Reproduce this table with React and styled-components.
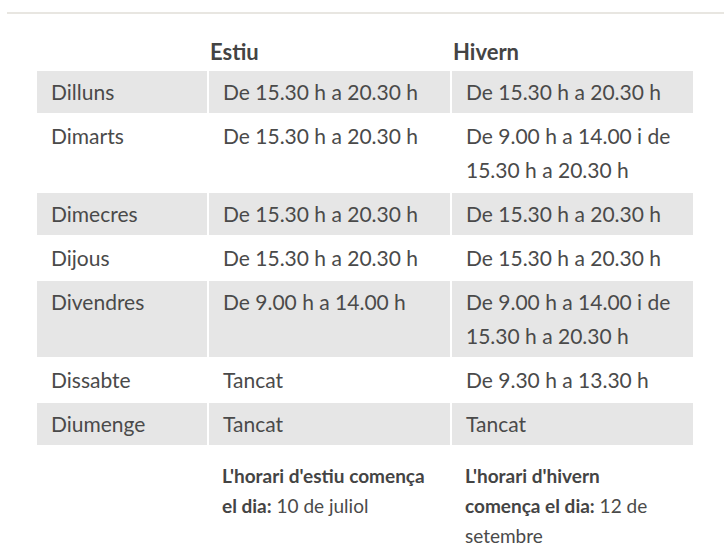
import React from 'react'
import styled, { createGlobalStyle } from 'styled-components'

const GlobalStyle = createGlobalStyle`
  body {
    margin: 0;
    background: #fff;
    font-family: Lato, "Open Sans", sans-serif;
    color: #4a4a4a;
  }
`

const Page = styled.div`
  padding: 12px 0 0 7px;
`

const Rule = styled.div`
  border-top: 2px solid #e8e6e1;
  padding: 19px 0 0 28px;
`

const Table = styled.table`
  border-collapse: separate;
  border-spacing: 2px;
  table-layout: fixed;
  width: 659px;
`

const Head = styled.th`
  text-align: left;
  font-weight: 700;
  font-size: 22px;
  line-height: 34px;
  padding: 0 1px;
  color: #444;
`

const Cell = styled.td`
  background: ${p => (p.shaded ? '#e6e6e6' : 'transparent')};
  font-size: 21px;
  line-height: 34px;
  padding: 4px 15px 4px 14px;
  vertical-align: top;
`

const Note = styled.td`
  font-size: 19px;
  line-height: 30px;
  padding: 14px 15px 0 13px;
  vertical-align: top;
  b { font-weight: 700; color: #444; }
`

const rows = [
  ['Dilluns', 'De 15.30 h a 20.30 h', 'De 15.30 h a 20.30 h'],
  ['Dimarts', 'De 15.30 h a 20.30 h', 'De 9.00 h a 14.00 i de 15.30 h a 20.30 h'],
  ['Dimecres', 'De 15.30 h a 20.30 h', 'De 15.30 h a 20.30 h'],
  ['Dijous', 'De 15.30 h a 20.30 h', 'De 15.30 h a 20.30 h'],
  ['Divendres', 'De 9.00 h a 14.00 h', 'De 9.00 h a 14.00 i de 15.30 h a 20.30 h'],
  ['Dissabte', 'Tancat', 'De 9.30 h a 13.30 h'],
  ['Diumenge', 'Tancat', 'Tancat']
]

export default function App () {
  return (
    <Page>
      <GlobalStyle />
      <Rule>
        <Table>
          <colgroup>
            <col style={{ width: 170 }} />
            <col style={{ width: 241 }} />
            <col style={{ width: 241 }} />
          </colgroup>
          <thead>
            <tr>
              <Head />
              <Head>Estiu</Head>
              <Head>Hivern</Head>
            </tr>
          </thead>
          <tbody>
            {rows.map((r, i) => (
              <tr key={r[0]}>
                {r.map((c, j) => (
                  <Cell key={j} shaded={i % 2 === 0}>{c}</Cell>
                ))}
              </tr>
            ))}
            <tr>
              <Note />
              <Note><b>L'horari d'estiu comença el dia:</b> 10 de juliol</Note>
              <Note><b>L'horari d'hivern comença el dia:</b> 12 de setembre</Note>
            </tr>
          </tbody>
        </Table>
      </Rule>
    </Page>
  )
}
